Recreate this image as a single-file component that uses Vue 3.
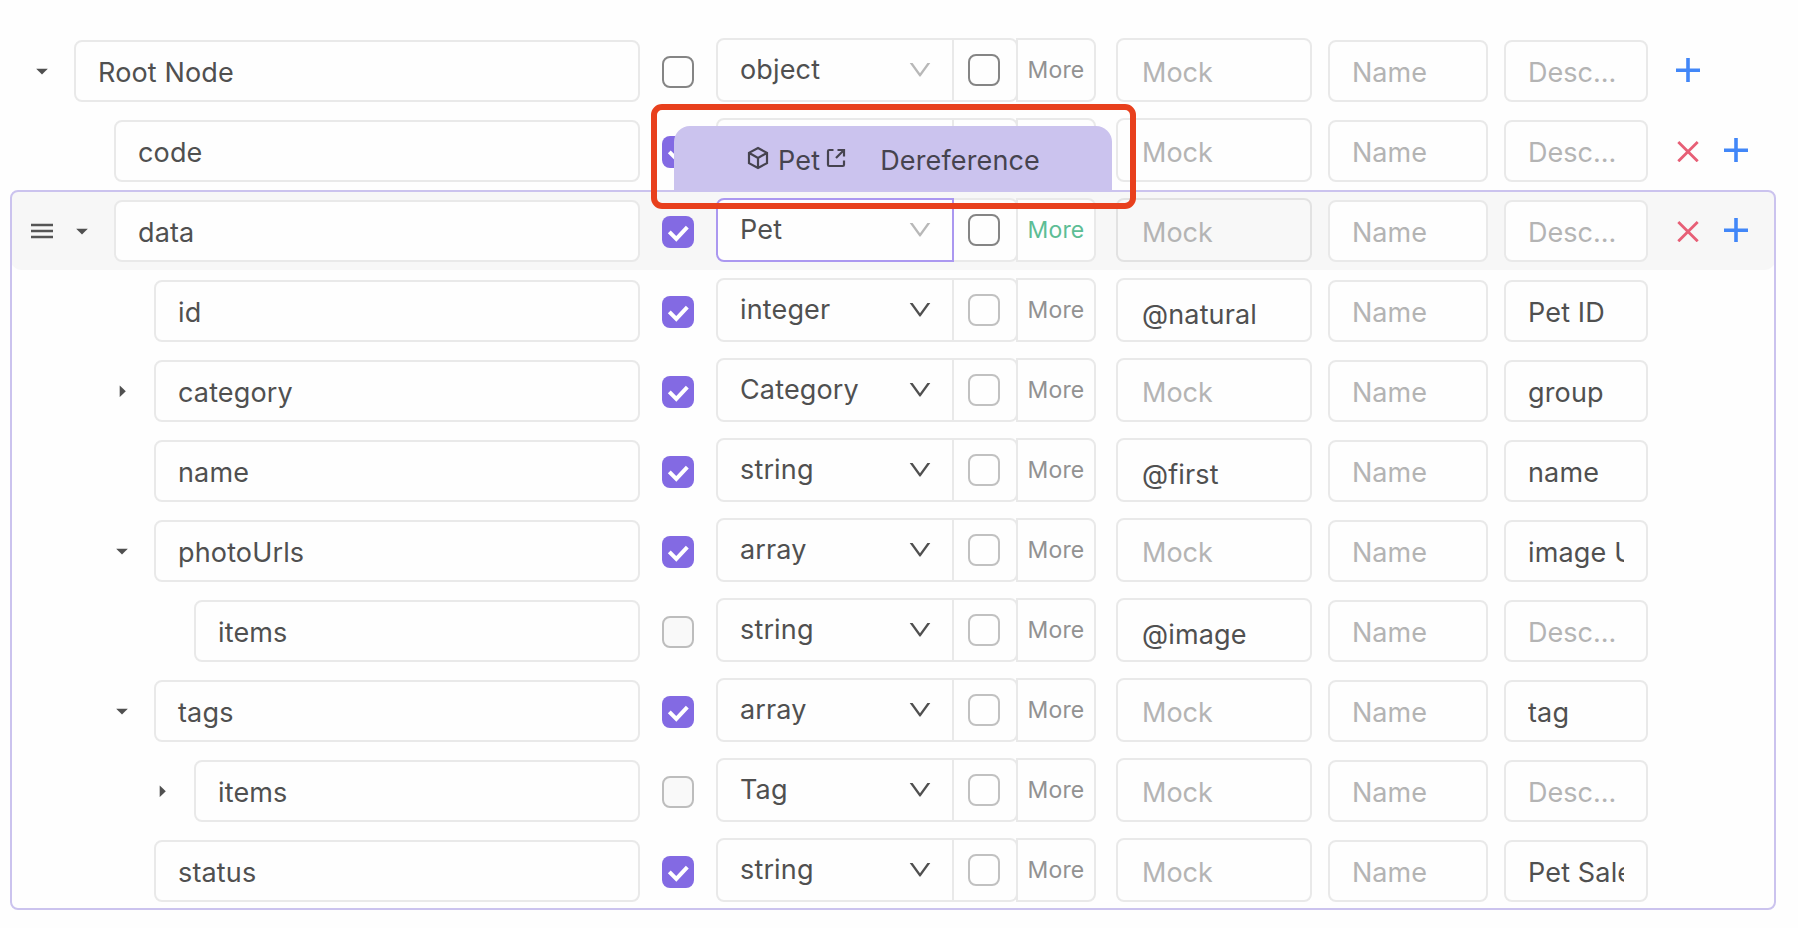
<script setup>
const make = (level, name, check, type, mock, desc, toggle, extra = {}) => ({
  level, name, check, type, mock, desc, toggle, ...extra,
})

const outer = [
  make(0, 'Root Node', 'off', 'object', '', '', 'down', { open: true, add: true }),
  make(1, 'code', 'on', '', '', '', '', { open: true, add: true, remove: true, covered: true }),
]
const group = [
  make(1, 'data', 'on', 'Pet', '', '', 'down', { open: true, add: true, remove: true, active: true }),
  make(2, 'id', 'on', 'integer', '@natural', 'Pet ID', ''),
  make(2, 'category', 'on', 'Category', '', 'group', 'right'),
  make(2, 'name', 'on', 'string', '@first', 'name', ''),
  make(2, 'photoUrls', 'on', 'array', '', 'image U', 'down'),
  make(3, 'items', 'disabled', 'string', '@image', '', ''),
  make(2, 'tags', 'on', 'array', '', 'tag', 'down'),
  make(3, 'items', 'disabled', 'Tag', '', '', 'right'),
  make(2, 'status', 'on', 'string', '', 'Pet Sale', ''),
]
const sections = [
  { key: 'outer', rows: outer },
  { key: 'group', rows: group },
]
</script>

<template>
  <main class="editor">
    <section v-for="s in sections" :key="s.key" class="section" :class="s.key">
      <div v-for="(r, i) in s.rows" :key="i" class="row" :class="{ active: r.active }">
        <div class="tree" :class="'level-' + r.level">
          <span v-if="r.active" class="slot">
            <svg class="handle" width="22" height="16" viewBox="0 0 22 16"><path d="M0 2h22M0 8h22M0 14h22" /></svg>
          </span>
          <span class="slot">
            <svg v-if="r.toggle === 'down'" class="caret" width="12" height="12" viewBox="0 0 12 12"><path d="M.2 3.700h11.600L6 9.600z" /></svg>
            <svg v-if="r.toggle === 'right'" class="caret" width="12" height="12" viewBox="0 0 12 12"><path d="M3.700.5v11.600L9.800 6.300z" /></svg>
          </span>
          <div class="field name">{{ r.name }}</div>
        </div>
        <span class="check main-check" :class="r.check">
          <svg v-if="r.check === 'on'" width="32" height="32" viewBox="0 0 32 32"><path d="M7.300 15.800l7 7L25.300 11.200" /></svg>
        </span>
        <div class="type">
          <div class="select">
            <span>{{ r.type }}</span>
            <svg class="chevron" :class="{ faded: r.open }" width="22" height="16" viewBox="0 0 22 16"><path d="M.7 1h2.900L11 11.200 18.400 1h2.900L11.700 14.300a.9.9 0 0 1-1.400 0z" /></svg>
          </div>
          <div class="nullable"><span class="check" :class="r.open ? 'off' : 'light'"></span></div>
          <div class="more"><span v-if="!r.covered">More</span></div>
        </div>
        <div class="field mock" :class="{ filled: r.mock, empty: !r.mock }">{{ r.mock || 'Mock' }}</div>
        <div class="field alias empty">Name</div>
        <div class="field desc" :class="{ empty: !r.desc }"><span>{{ r.desc || 'Desc...' }}</span></div>
        <div class="actions">
          <svg v-if="r.remove" class="remove" width="24" height="24" viewBox="0 0 24 24"><path d="M2.300 3.900l19.400 19.400M21.700 3.900L2.300 23.300" /></svg>
          <svg v-if="r.add" class="add" width="24" height="24" viewBox="0 0 24 24"><path d="M0 12.200h24M12 0v24" /></svg>
        </div>
      </div>
    </section>

    <div class="reference">
      <svg class="cube" width="22" height="24" viewBox="0 0 22 24"><path d="M11 2l9 4.800v10.400L11 22l-9-4.800V6.800zM2.300 7l8.700 5 8.700-5M11 12v10" /></svg>
      <span class="ref-name">Pet</span>
      <svg class="external" width="20" height="20" viewBox="0 0 20 20"><path d="M7.500 2H3.200A1.200 1.200 0 0 0 2 3.200v13.600A1.200 1.200 0 0 0 3.200 18h13.600A1.200 1.200 0 0 0 18 16.800V12.500M11.500 2H18v6.500M18 2l-8 8" /></svg>
      <span class="deref">Dereference</span>
    </div>
    <div class="highlight"></div>
  </main>
</template>

<style>
body {
  background: #fefefe;
}
</style>

<style scoped>
.editor {
  position: relative;
  box-sizing: border-box;
  width: 1798px;
  height: 928px;
  padding: 30px 22px 0 10px;
  overflow: hidden;
  background: #fefefe;
  color: #505050;
  font: 27px/62px Inter, "Liberation Sans", sans-serif;
  letter-spacing: 0.15px;
}
.editor * {
  box-sizing: border-box;
}
.section {
  position: relative;
}
.group::after {
  content: "";
  position: absolute;
  inset: 0;
  border: 2px solid #cbc3ee;
  border-radius: 8px;
}
.row {
  display: flex;
  align-items: flex-end;
  height: 80px;
  padding-bottom: 8px;
  border-radius: 12px;
}
.row.active {
  background: #f7f7f7;
}
.tree {
  display: flex;
  align-items: center;
  width: 630px;
  padding-left: 12px;
}
.level-1 { padding-left: 52px; }
.active .level-1 { padding-left: 12px; }
.level-2 { padding-left: 92px; }
.level-3 { padding-left: 132px; }
.slot {
  display: flex;
  flex: none;
  align-items: center;
  justify-content: center;
  width: 40px;
}
.caret {
  fill: #505050;
}
.handle {
  fill: none;
  stroke: #555;
  stroke-width: 2.4;
}
.field {
  flex: none;
  height: 62px;
  padding: 0 22px;
  overflow: hidden;
  border: 2px solid #e9e9e9;
  border-radius: 8px;
  background: #fefefe;
  white-space: nowrap;
}
.empty {
  color: #b4b4b4;
  letter-spacing: 0;
}
.name {
  flex: 1;
  margin-left: 12px;
}
.check {
  flex: none;
  width: 32px;
  height: 32px;
  border: 2px solid #858585;
  border-radius: 8px;
  background: #fefefe;
}
.main-check {
  margin: 0 22px 14px;
}
.check.light {
  border-color: #c1c1c1;
}
.check.disabled {
  border-color: #bdbdbd;
  background: #f9f9f9;
}
.check.on {
  border: 0;
  background: #836ae3;
}
.check svg {
  display: block;
  fill: none;
  stroke: #fff;
  stroke-width: 4;
}
.type {
  display: flex;
  width: 380px;
  height: 64px;
}
.select {
  display: flex;
  align-items: center;
  justify-content: space-between;
  width: 238px;
  padding: 0 22px;
  border: 2px solid #e9e9e9;
  border-radius: 8px 0 0 8px;
  background: #fefefe;
}
.active .select {
  border-color: #ab98f0;
}
.chevron {
  margin: 0 -1px 0 0;
  fill: #505050;
}
.chevron.faded {
  fill: #b8b8b8;
}
.nullable {
  width: 64px;
  padding: 14px;
  border: 2px solid #e9e9e9;
  border-left: 0;
  border-radius: 0 8px 8px 0;
  background: #fefefe;
}
.nullable .check {
  display: block;
}
.more {
  width: 80px;
  margin-left: -2px;
  border: 2px solid #e9e9e9;
  border-radius: 0 8px 8px 0;
  background: #fefefe;
  color: #929292;
  font-size: 23px;
  line-height: 60px;
  text-align: center;
}
.active .more {
  color: #5dbd95;
}
.mock {
  width: 196px;
  height: 64px;
  margin-left: 20px;
  padding: 2px 24px 0;
}
.mock.filled {
  padding-top: 4px;
}
.active .mock {
  border-color: #e2e2e2;
  background: #f8f8f8;
}
.alias {
  width: 160px;
  margin-left: 16px;
}
.desc {
  width: 144px;
  margin-left: 16px;
}
.desc span {
  display: block;
  overflow: hidden;
}
.actions {
  display: flex;
  gap: 24px;
  margin: 0 0 20px 28px;
}
.actions svg {
  fill: none;
}
.add {
  stroke: #4287f8;
  stroke-width: 3.6;
}
.remove {
  stroke: #e75f76;
  stroke-width: 2.8;
}
.reference {
  position: absolute;
  top: 126px;
  left: 674px;
  display: flex;
  align-items: center;
  width: 438px;
  height: 66px;
  padding-left: 73px;
  border-radius: 16px 16px 0 0;
  background: #cbc3ee;
  color: #46434f;
}
.reference svg {
  flex: none;
  fill: none;
  stroke: #46434f;
  stroke-width: 2.2;
}
.reference span {
  padding-top: 3px;
}
.cube {
  margin-bottom: 2px;
}
.ref-name {
  margin-left: 9px;
}
.external {
  margin: 0 0 2px 6px;
}
.deref {
  margin-left: 34px;
}
.highlight {
  position: absolute;
  top: 104px;
  left: 651px;
  width: 485px;
  height: 105px;
  border: 6px solid #e8401d;
  border-radius: 11px;
}
</style>
